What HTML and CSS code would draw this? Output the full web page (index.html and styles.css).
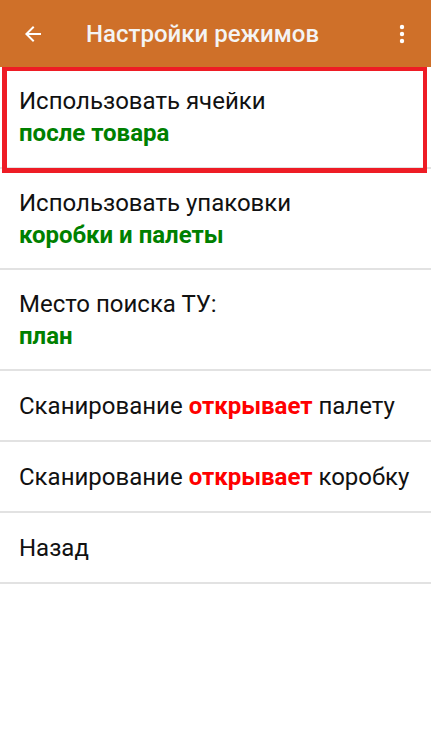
FILE: index.html
```html
<!DOCTYPE html>
<html lang="ru">
<head>
<meta charset="utf-8">
<link rel="stylesheet" href="styles.css">
</head>
<body>
<div class="app">
  <header class="bar">
    <svg class="back" width="24" height="24" viewBox="0 0 24 24"><path d="M20 11H7.83l5.59-5.59L12 4l-8 8 8 8 1.41-1.41L7.83 13H20v-2z" fill="#fff"/></svg>
    <div class="title">Настройки режимов</div>
    <svg class="more" width="24" height="24" viewBox="0 0 24 24"><circle cx="12" cy="5" r="2.2" fill="#fff"/><circle cx="12" cy="12" r="2.2" fill="#fff"/><circle cx="12" cy="19" r="2.2" fill="#fff"/></svg>
  </header>
  <ul class="list">
    <li class="item two selected">
      <div>Использовать ячейки</div>
      <div class="val green">после товара</div>
      <span class="mark"></span>
    </li>
    <li class="item two">
      <div>Использовать упаковки</div>
      <div class="val green">коробки и палеты</div>
    </li>
    <li class="item two">
      <div>Место поиска ТУ:</div>
      <div class="val green">план</div>
    </li>
    <li class="item one">
      <div>Сканирование <b class="red">открывает</b> палету</div>
    </li>
    <li class="item one">
      <div>Сканирование <b class="red">открывает</b> коробку</div>
    </li>
    <li class="item one">
      <div>Назад</div>
    </li>
  </ul>
</div>
</body>
</html>
```
FILE: styles.css
```css
* { box-sizing: border-box; }
html, body { margin: 0; padding: 0; background: #fff; }
body { font-family: Roboto, "Noto Sans", sans-serif; color: #111; }
.app { width: 431px; }
.bar {
  height: 67px;
  background: #cf7029;
  display: flex;
  align-items: center;
  padding: 0 17px 0 21px;
}
.back { flex: none; }
.title {
  flex: 1;
  color: #f4f4f4;
  font-size: 24px;
  font-weight: 500;
  margin-left: 41px;
}
.more { flex: none; }
.list { list-style: none; margin: 0; padding: 0; }
.item {
  position: relative;
  border-bottom: 2px solid #e2e2e2;
  padding: 0 19px;
  font-size: 24px;
  line-height: 32px;
  display: flex;
  flex-direction: column;
  justify-content: center;
  white-space: nowrap;
}
.item.two { height: 101px; }
.item.one { height: 71px; }
.item.two:first-child { height: 102px; }
.val { font-weight: 700; }
.green { color: #008000; }
.red { color: #ff0000; font-weight: 700; }
.mark {
  position: absolute;
  left: 2px;
  right: 4px;
  top: 0;
  bottom: -6px;
  border: 4px solid #ee1c25;
  border-left-width: 5px;
  border-bottom-width: 5px;
}
```
